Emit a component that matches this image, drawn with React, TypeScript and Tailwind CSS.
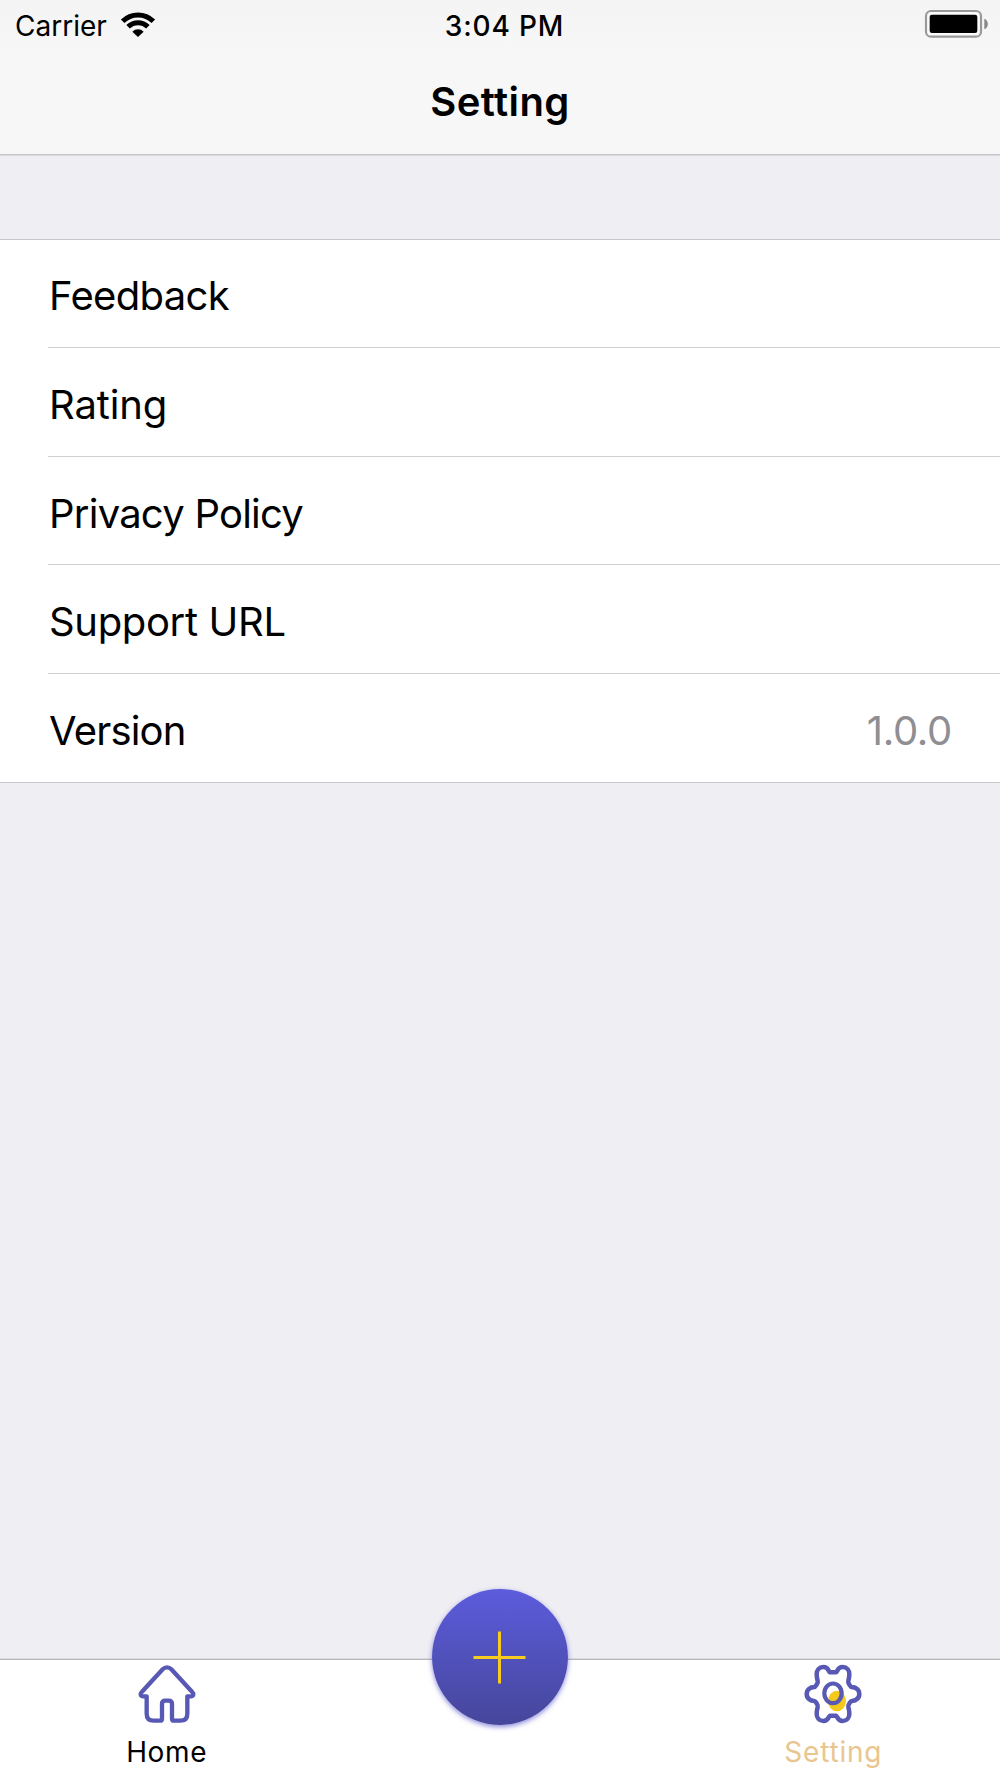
const rows = [
    { label: "Feedback", className: "h-[108px] pt-1", text: "tracking-[-0.65px]" },
    { label: "Rating", className: "h-[109px] pt-[5px]", text: "tracking-[-0.15px]" },
    { label: "Privacy Policy", className: "h-[108px] pt-[6px]", text: "tracking-[-0.76px]" },
    { label: "Support URL", className: "h-[109px] pt-[6px]", text: "tracking-[-0.34px]" },
    { label: "Version", className: "h-[108px] pt-[6px]", text: "tracking-[-0.85px]", value: "1.0.0" },
];

function WifiIcon() {
    return (
        <svg className="h-[26px] w-9" viewBox="360 34 108 78" fill="none" stroke="#000" strokeWidth="15">
            <path d="M368 62A65 65 0 0 1 460 62" />
            <path d="M384.3 78.3A42 42 0 0 1 443.7 78.3" />
            <path d="M414 109L397 93A24 24 0 0 1 431 93Z" fill="#000" stroke="none" />
        </svg>
    );
}

function BatteryIcon() {
    return (
        <svg className="h-[30px] w-[66px]" viewBox="72 27 198 90">
            <rect x="78" y="33" width="165" height="77" rx="15" fill="#fafafa" stroke="#999" strokeWidth="6.5" />
            <rect x="89" y="44" width="143" height="55" rx="7" />
            <path d="M253 56C267 61 267 83 253 88Z" fill="#888" />
        </svg>
    );
}

function HomeIcon() {
    return (
        <svg className="size-[60px]" viewBox="110 70 180 180" fill="none" stroke="#5759b5" strokeWidth="13">
            <path
                strokeLinejoin="round"
                d="M139 167V219Q139 240 160 240H179Q185 240 185 234V190Q185 180 195 180H205Q215 180 215 190V234Q215 240 221 240H240Q261 240 261 219V167H271Q278 167 279 161Q280 158 275 153L213 86Q207 80 200 80Q193 80 187 86L125 153Q120 158 121 161Q122 167 129 167Z"
            />
        </svg>
    );
}

const gearQuarter =
    "M0 -65H9C14 -66 12 -81 29 -81C42 -81 49 -71 49 -60C49 -52 48 -46 46 -40C44 -34 48 -30 51 -25C54 -18 61 -22 68 -18C76 -14 79 -7 79 0";

function SettingIcon() {
    return (
        <svg className="size-[60px]" viewBox="-90 -90 180 180" fill="none" stroke="#5759b5" strokeWidth="13.5">
            <ellipse cx="12" cy="21" rx="27" ry="31" fill="#f5c81c" stroke="none" />
            <path d={gearQuarter} />
            <path d={gearQuarter} transform="scale(-1 1)" />
            <path d={gearQuarter} transform="scale(1 -1)" />
            <path d={gearQuarter} transform="scale(-1 -1)" />
            <ellipse cx="0" cy="-2" rx="26" ry="29.5" strokeWidth="12.5" />
        </svg>
    );
}

export default function App() {
    return (
        <div className="flex h-[1778px] w-[1000px] flex-col overflow-hidden bg-[#efeef3] font-['Inter',sans-serif] text-black">
            {/* Header */}
            <header className="h-[155px] border-b border-[#c6c6c9] bg-[#f7f7f7] shadow-[0_1px_0_#dadade]">
                <div className="grid h-[51px] grid-cols-3 items-center bg-gradient-to-b from-[#f4f4f4] to-[#f7f7f7] text-[28px] leading-[50px]">
                    <div className="flex items-center gap-[13px] pl-[15px]">
                        <span>Carrier</span>
                        <span className="-mt-[2px]">
                            <WifiIcon />
                        </span>
                    </div>
                    <span className="pl-[9px] text-center font-medium tracking-[0.85px]">3:04 PM</span>
                    <div className="flex justify-end pr-[10px]">
                        <span className="-mt-[3px]">
                            <BatteryIcon />
                        </span>
                    </div>
                </div>
                <h1 className="pt-[26px] text-center text-[40px] leading-[50px] font-semibold tracking-[0.4px]">Setting</h1>
            </header>

            {/* Options */}
            <main className="flex-1 pt-[84px]">
                <ul className="border-y border-[#c8c7cc] bg-white pl-12">
                    {rows.map((row, i) => (
                        <li
                            key={row.label}
                            className={`flex items-center justify-between pr-12 pl-px text-[40px] ${row.className} ${
                                i < rows.length - 1 ? "border-b border-[#cfced2]" : ""
                            }`}
                        >
                            <span className={row.text}>{row.label}</span>
                            {row.value && <span className="tracking-[-0.3px] text-[#8e8e93]">{row.value}</span>}
                        </li>
                    ))}
                </ul>
            </main>

            {/* Tab bar */}
            <nav className="relative grid h-[119px] grid-cols-3 border-t border-[#b6b6b9] bg-white text-[28px] leading-10 shadow-[0_-1px_0_#dddde1]">
                <div className="flex flex-col items-center pt-[4px]">
                    <HomeIcon />
                    <span className="mt-2 tracking-[0.63px]">Home</span>
                </div>
                <button
                    aria-label="Add"
                    className="absolute -top-[71px] left-[432px] flex size-[136px] items-center justify-center rounded-full bg-gradient-to-b from-[#5c5cdd] to-[#46469b] shadow-[0_2px_5px_#5a5ad0b0]"
                >
                    <svg className="size-[54px]" viewBox="0 0 54 54" stroke="#f7cb20" strokeWidth="3">
                        <path d="M.5 27.5H52.5M26.5 1.5V53.5" />
                    </svg>
                </button>
                <div className="col-start-3 flex flex-col items-center pt-[4px]">
                    <SettingIcon />
                    <span className="mt-2 tracking-[0.8px] text-[#e9c68f]">Setting</span>
                </div>
            </nav>
        </div>
    );
}
